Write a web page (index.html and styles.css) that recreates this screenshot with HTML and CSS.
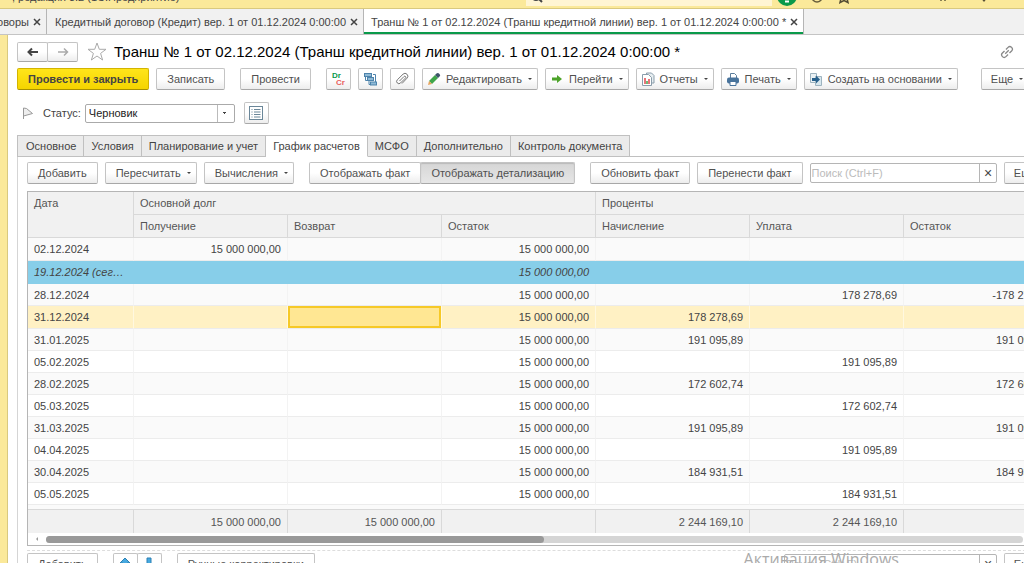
FILE: index.html
```html
<!DOCTYPE html>
<html lang="ru">
<head>
    <meta charset="UTF-8">
    <meta name="viewport" content="width=device-width, initial-scale=1.0">
    <title>Транш № 1 от 02.12.2024</title>
    <link rel="stylesheet" href="styles.css">
</head>
<body>
    <header class="app-bar">
        <span class="app-name">, редакция 3.2 (1С:Предприятие)</span>
        <div class="app-search">
            <svg width="14" height="14" viewBox="0 0 14 14"><circle cx="7" cy="7" r="4" fill="none" stroke="#444" stroke-width="2"/><path d="M10 10l3 3" stroke="#444" stroke-width="2"/></svg>
        </div>
        <div class="app-icons">
            <svg width="20" height="20" viewBox="0 0 20 20"><circle cx="10" cy="9" r="10" fill="#0a9a4a"/><path d="M5 12h10M8 14.500h4" stroke="#fff" stroke-width="2"/></svg>
            <svg width="14" height="14" viewBox="0 0 14 14"><circle cx="7" cy="7" r="5" fill="none" stroke="#665d3b" stroke-width="1.500"/></svg>
            <svg width="14" height="14" viewBox="0 0 14 14"><path d="M7 1l2 4 4 .5-3 3 1 4-4-2-4 2 1-4-3-3 4-.5z" fill="none" stroke="#554d33" stroke-width="1.500"/></svg>
            <svg class="menu-dots" width="14" height="14" viewBox="0 0 14 14"><path d="M4 10h2M8 10h2" stroke="#665d3b" stroke-width="1.500"/></svg>
            <svg class="menu-arrow" width="14" height="14" viewBox="0 0 14 14"><path d="M3 7h8l-4 5z" fill="#554d33"/></svg>
        </div>
    </header>

    <nav class="windows">
        <div class="window first"><a href="#">Договоры</a><button class="close" aria-label="Закрыть"><svg width="8" height="8" viewBox="0 0 8 8"><path d="M1 1l6 6M7 1L1 7"/></svg></button></div>
        <div class="window"><a href="#">Кредитный договор (Кредит) вер. 1 от 01.12.2024 0:00:00</a><button class="close" aria-label="Закрыть"><svg width="8" height="8" viewBox="0 0 8 8"><path d="M1 1l6 6M7 1L1 7"/></svg></button></div>
        <div class="window active"><a href="#">Транш № 1 от 02.12.2024 (Транш кредитной линии) вер. 1 от 01.12.2024 0:00:00 *</a><button class="close" aria-label="Закрыть"><svg width="8" height="8" viewBox="0 0 8 8"><path d="M1 1l6 6M7 1L1 7"/></svg></button></div>
    </nav>

    <main class="form">
        <div class="heading">
            <div class="group">
                <button class="btn arrow" aria-label="Назад"><svg width="14" height="10" viewBox="0 0 14 10"><path d="M2 5h10M6 1.500L2.500 5 6 8.500" fill="none" stroke="#444" stroke-width="2"/></svg></button>
                <button class="btn arrow" aria-label="Вперед"><svg width="14" height="10" viewBox="0 0 14 10"><path d="M2 5h10M8 1.500L11.500 5 8 8.500" fill="none" stroke="#aaa" stroke-width="1.500"/></svg></button>
            </div>
            <svg class="star" width="20" height="19" viewBox="0 0 20 19"><path d="M10 1l2.300 6.300H19l-5.400 4.100 2 6.600L10 14l-5.600 4 2-6.600L1 7.300h6.700z" fill="#fff" stroke="#aaa"/></svg>
            <h1>Транш № 1 от 02.12.2024 (Транш кредитной линии) вер. 1 от 01.12.2024 0:00:00 *</h1>
            <svg class="link" width="14" height="14" viewBox="0 0 14 14"><g fill="none" stroke="#888" stroke-width="1.300" transform="rotate(-45 7 7)"><path d="M6 4.500H3a2.500 2.500 0 0 0 0 5h3M8 4.500h3a2.500 2.500 0 0 1 0 5H8M4.500 7h5"/></g></svg>
        </div>

        <div class="commands">
            <button class="btn primary">Провести и закрыть</button>
            <button class="btn">Записать</button>
            <button class="btn apart">Провести</button>
            <button class="btn icon apart" aria-label="Дт/Кт"><svg width="16" height="16" viewBox="0 0 16 16"><text x="2" y="7" font-size="8" font-weight="bold" fill="#0a9a4a">Dr</text><text x="6" y="14" font-size="8" font-weight="bold" fill="#e8605c">Cr</text></svg></button>
            <button class="btn icon" aria-label="Структура"><svg width="14" height="14" viewBox="0 0 14 14"><path d="M2.500 4v4.500H5M6 9v3.500h2M10 2.500h2.500V10" fill="none" stroke="#4d83ab"/><g fill="#8fbad6" stroke="#4d83ab"><rect x="1.500" y="1.500" width="7" height="3"/><rect x="4.500" y="5.500" width="6" height="3"/><rect x="7.500" y="10" width="6" height="3"/></g></svg></button>
            <button class="btn icon" aria-label="Файлы"><svg width="14" height="14" viewBox="0 0 14 14"><path d="M4.500 9L9 4.500a1 1 0 0 1 1.500 1.500L5.500 11A2.200 2.200 0 0 1 2.300 7.800L8 2.200a2.800 2.800 0 0 1 4 4L7 11.500" fill="none" stroke="#777"/></svg></button>
            <button class="btn menu"><svg width="14" height="14" viewBox="0 0 14 14"><path d="M2 9l6-6 3 3-6 6z" fill="#3fa54a"/><path d="M8 3l1.500-1.500Q11 .5 12.500 2T12.500 4.500L11 6z" fill="#3f556b"/><path d="M2 9l3 3-4 1z" fill="#e8a35c"/></svg>Редактировать</button>
            <button class="btn menu"><svg width="14" height="14" viewBox="0 0 14 14"><path d="M2 5.500h5V3l5 4-5 4V8.500H2z" fill="#4da32a"/></svg>Перейти</button>
            <button class="btn menu"><svg width="14" height="14" viewBox="0 0 14 14"><path d="M5.500 3V1h5L13 3.500V11h-2" fill="#e6edf0" stroke="#8a9dab"/><path d="M1.500 2.500h6l3 3v8h-9z" fill="#fff" stroke="#8a9dab"/><path d="M4 12V6" stroke="#e0474c" stroke-width="1.500"/><path d="M6 12V9" stroke="#3fa54a" stroke-width="1.500"/><path d="M8 12V7" stroke="#e0474c" stroke-width="1.500"/></svg>Отчеты</button>
            <button class="btn menu"><svg width="14" height="14" viewBox="0 0 14 14"><path d="M4.500 6V1.500h4l2 2V6" fill="#fff" stroke="#5b7d9b"/><rect x="1" y="5.500" width="12" height="6" rx="2" fill="#48739b"/><path d="M4 9.500h6v4H4z" fill="#fff" stroke="#48739b"/></svg>Печать</button>
            <button class="btn menu"><svg width="14" height="14" viewBox="0 0 14 14"><path d="M1.500 1.500h6v9h-6z" fill="#eaf1f4" stroke="#9db3bf"/><path d="M6.500 4.500h6v9h-6z" fill="#d7e7ee" stroke="#9db3bf"/><path d="M3 6h4V3.500L11 7.500l-4 4V9H3z" fill="#28618c"/></svg>Создать на основании</button>
            <button class="btn more">Еще</button>
        </div>

        <div class="status">
            <svg width="12" height="12" viewBox="0 0 12 12"><path d="M1.500 12V1l3 .5 6 5-9 2.500" fill="#eee" stroke="#999"/></svg>
            <label for="status">Статус:</label>
            <select id="status">
                <option>Черновик</option>
            </select>
            <button class="btn icon" aria-label="Список"><svg width="14" height="14" viewBox="0 0 14 14"><rect x=".5" y=".5" width="13" height="13" fill="#fff" stroke="#6b8799"/><path d="M2.500 3.500h1M5 3.500h6.500M2.500 6h1M5 6h6.500M2.500 8.500h1M5 8.500h6.500M2.500 11h1M5 11h6.500" stroke="#6b8799"/></svg></button>
        </div>

        <nav class="tabs">
            <button class="tab">Основное</button>
            <button class="tab">Условия</button>
            <button class="tab">Планирование и учет</button>
            <button class="tab current">График расчетов</button>
            <button class="tab">МСФО</button>
            <button class="tab">Дополнительно</button>
            <button class="tab">Контроль документа</button>
        </nav>

        <section class="page">
            <div class="commands">
                <button class="btn">Добавить</button>
                <button class="btn menu">Пересчитать</button>
                <button class="btn menu">Вычисления</button>
                <div class="group apart">
                    <button class="btn">Отображать факт</button>
                    <button class="btn pressed">Отображать детализацию</button>
                </div>
                <button class="btn apart">Обновить факт</button>
                <button class="btn">Перенести факт</button>
                <div class="search">
                    <input type="text" placeholder="Поиск (Ctrl+F)" aria-label="Поиск">
                    <button aria-label="Очистить">×</button>
                </div>
                <button class="btn more">Еще</button>
            </div>

            <div class="grid">
                <table>
                    <colgroup>
                        <col class="date">
                        <col class="sum" span="6">
                    </colgroup>
                    <thead>
                        <tr><th rowspan="2">Дата</th><th colspan="3">Основной долг</th><th colspan="3">Проценты</th></tr>
                        <tr><th>Получение</th><th>Возврат</th><th>Остаток</th><th>Начисление</th><th>Уплата</th><th>Остаток</th></tr>
                    </thead>
                    <tbody>
                        <tr class="opening"><td>02.12.2024</td><td>15 000 000,00</td><td></td><td>15 000 000,00</td><td></td><td></td><td></td></tr>
                        <tr class="today"><td>19.12.2024 (сегодня)</td><td></td><td></td><td>15 000 000,00</td><td></td><td></td><td></td></tr>
                        <tr><td>28.12.2024</td><td></td><td></td><td>15 000 000,00</td><td></td><td>178 278,69</td><td>-178 278,69</td></tr>
                        <tr class="selected"><td>31.12.2024</td><td></td><td class="cell"></td><td>15 000 000,00</td><td>178 278,69</td><td></td><td></td></tr>
                        <tr><td>31.01.2025</td><td></td><td></td><td>15 000 000,00</td><td>191 095,89</td><td></td><td>191 095,89</td></tr>
                        <tr><td>05.02.2025</td><td></td><td></td><td>15 000 000,00</td><td></td><td>191 095,89</td><td></td></tr>
                        <tr><td>28.02.2025</td><td></td><td></td><td>15 000 000,00</td><td>172 602,74</td><td></td><td>172 602,74</td></tr>
                        <tr><td>05.03.2025</td><td></td><td></td><td>15 000 000,00</td><td></td><td>172 602,74</td><td></td></tr>
                        <tr><td>31.03.2025</td><td></td><td></td><td>15 000 000,00</td><td>191 095,89</td><td></td><td>191 095,89</td></tr>
                        <tr><td>04.04.2025</td><td></td><td></td><td>15 000 000,00</td><td></td><td>191 095,89</td><td></td></tr>
                        <tr><td>30.04.2025</td><td></td><td></td><td>15 000 000,00</td><td>184 931,51</td><td></td><td>184 931,51</td></tr>
                        <tr><td>05.05.2025</td><td></td><td></td><td>15 000 000,00</td><td></td><td>184 931,51</td><td></td></tr>
                        <tr class="rest"><td colspan="7"></td></tr>
                    </tbody>
                    <tfoot>
                        <tr><td></td><td>15 000 000,00</td><td>15 000 000,00</td><td></td><td>2 244 169,10</td><td>2 244 169,10</td><td></td></tr>
                    </tfoot>
                </table>
                <div class="scroll">
                    <span class="scroll-left"></span>
                    <div class="track"><div class="thumb"></div></div>
                </div>
            </div>

            <div class="commands lower">
                <button class="btn">Добавить</button>
                <div class="group apart">
                    <button class="btn icon" aria-label="Вверх"><svg width="12" height="14" viewBox="0 0 12 14"><path d="M6 1l5 5H8v7H4V6H1z" fill="#46a9e0" stroke="#2d80b4"/></svg></button>
                    <button class="btn icon" aria-label="Вниз"><svg width="12" height="14" viewBox="0 0 12 14"><path d="M6 13l5-5H8V1H4v7H1z" fill="#46a9e0" stroke="#2d80b4"/></svg></button>
                </div>
                <button class="btn apart">Ручные корректировки</button>
                <div class="search">
                    <input type="text" placeholder="Поиск (Ctrl+F)" aria-label="Поиск">
                    <button aria-label="Очистить">×</button>
                </div>
                <button class="btn more">Еще</button>
            </div>
        </section>
    </main>
    <div class="watermark">Активация Windows</div>
</body>
</html>
```
FILE: styles.css
```css
*{
    margin: 0;
    padding: 0;
    box-sizing: border-box;
}
body{
    font-family: "Liberation Sans", Arial, sans-serif;
    font-size: 11px;
    color: #444;
    background-color: #fff;
    height: 100vh;
    overflow: hidden;
    position: relative;
}
button, input, select{
    font: inherit;
    color: inherit;
}
svg{
    display: block;
    flex: none;
}

/* application bar */
.app-bar{
    display: flex;
    align-items: center;
    height: 23px;
    margin-top: -14px;
    background-color: #fbe99a;
    border-bottom: 1px solid #d9c97f;
}
.app-name{
    flex: 1;
    padding-left: 12px;
}
.app-search{
    width: 24%;
    height: 20px;
    padding: 3px;
    background-color: #fff5d3;
    margin-bottom: 2px;
}
.app-icons{
    display: flex;
    align-items: center;
    gap: 13px;
    width: 252px;
    padding-left: 5px;
}
.menu-dots{
    margin-left: auto;
}
.menu-arrow{
    margin: 0 33px 0 14px;
}

/* open windows */
.windows{
    display: flex;
    height: 26px;
    background-color: #f1f1f1;
    border-bottom: 1px solid #c4c4c4;
}
.window{
    display: flex;
    align-items: center;
    gap: 4px;
    padding: 0 5px 0 8px;
    border-right: 1px solid #b5b5b5;
    white-space: nowrap;
}
.window a{
    color: #444;
    text-decoration: none;
}
.window.first{
    width: 47px;
    justify-content: flex-end;
}
.window.active{
    padding-left: 7px;
    background-color: #fff;
    box-shadow: inset 0 -2px #0a9a4a;
}
.close{
    border: none;
    background: none;
}
.close path{
    stroke: #444;
    stroke-width: 1.5;
}

/* form */
.form{
    margin-right: -27px;
    padding: 6px 0 0 10px;
    border-left: 7px solid #fbe99a;
    box-shadow: inset 1px 0 #d9c97f;
}
.heading{
    display: flex;
    align-items: center;
    height: 21px;
}
.star{
    margin: 0 7px 0 9px;
}
h1{
    font-size: 15px;
    font-weight: normal;
    color: #000;
    white-space: nowrap;
}
.link{
    margin: 0 37px 0 auto;
}
.commands{
    display: flex;
    gap: 7px;
}
.heading + .commands{
    margin-top: 6px;
    padding-right: 23px;
}
.btn{
    display: flex;
    align-items: center;
    justify-content: center;
    flex: none;
    height: 22px;
    padding: 0 10px;
    border: 1px solid #c4c4c4;
    border-bottom-color: #a8a8a8;
    border-radius: 2px;
    background: linear-gradient(#fff 50%, #ededed);
    color: #505050;
    white-space: nowrap;
}
.primary{
    background: linear-gradient(#ffe51a, #f5d400);
    border-color: #d3b400;
    border-bottom-color: #a89000;
    color: #444;
    font-weight: bold;
}
.apart{
    margin-left: 8px;
}
.icon{
    width: 25px;
    padding: 0;
}
.arrow{
    width: 31px;
    height: 20px;
    padding: 0;
}
.menu svg{
    margin: 0 5px 0 -6px;
}
.menu, .more{
    padding-right: 5px;
}
.menu::after, .more::after{
    content: "";
    margin-left: 6px;
    border: 2px solid transparent;
    border-top-color: #444;
    border-bottom: none;
}
.more{
    width: 47px;
    margin-left: auto;
}
.group{
    display: flex;
}
.group .btn + .btn{
    margin-left: -1px;
}
.pressed{
    background: linear-gradient(#d6d6d6, #e6e6e6);
    box-shadow: inset 0 1px 1px #bbb;
}

.status{
    display: flex;
    align-items: center;
    margin-top: 12px;
    padding-left: 5px;
}
.status label{
    margin: 0 4px 0 9px;
}
.status select{
    appearance: none;
    width: 150px;
    height: 19px;
    margin-right: 9px;
    padding-left: 3px;
    border: 1px solid #aaa;
    border-radius: 2px;
    color: #222;
    background:
        conic-gradient(from -45deg at 50% 100%, #444 90deg, transparent 0) right 7px center / 4px 2px no-repeat,
        linear-gradient(#bbb, #bbb) right 16px top / 1px 100% no-repeat,
        #fff;
}

.tabs{
    display: flex;
    margin-top: 11px;
    border-bottom: 1px solid #c0c0c0;
}
.tab{
    height: 22px;
    margin-bottom: -1px;
    padding: 0 7px;
    border: 1px solid #c0c0c0;
    border-left: none;
    background-color: #ebebeb;
    white-space: nowrap;
}
.tab:first-child{
    padding-left: 8px;
    border-left: 1px solid #c0c0c0;
}
.tab.current{
    background-color: #fff;
    border-bottom-color: #fff;
}
.page{
    padding: 5px 0 0 9px;
    border-left: 1px solid #d5d5d5;
}
.search{
    display: flex;
    flex: 1;
    height: 20px;
    margin-top: 1px;
    border: 1px solid #b5b5b5;
    border-radius: 2px;
}
.search input{
    flex: 1;
    min-width: 0;
    padding-left: 1px;
    border: none;
    background: none;
}
.search input::placeholder{
    color: #bbb;
}
.search button{
    width: 17px;
    border: none;
    border-left: 1px solid #b5b5b5;
    background: none;
    font-size: 14px;
    line-height: 16px;
}

/* schedule */
.grid{
    margin-top: 7px;
    border: 1px solid #b5b5b5;
    overflow: hidden;
}
table{
    width: 1030px;
    table-layout: fixed;
    border-collapse: separate;
    border-spacing: 0;
}
.date{
    width: 106px;
}
.sum{
    width: 154px;
}
th, td{
    height: 22px;
    padding: 0 6px;
    line-height: 16px;
    white-space: nowrap;
    overflow: hidden;
    text-overflow: ellipsis;
}
th{
    height: 23px;
    text-align: left;
    vertical-align: top;
    padding-top: 3px;
    font-weight: normal;
    color: #555;
    background-color: #f1f1f1;
    border-right: 1px solid #d9d9d9;
    border-bottom: 1px solid #d9d9d9;
}
td{
    text-align: right;
    border-right: 1px solid #f3f3f3;
    border-bottom: 1px solid #ececec;
}
td:first-child{
    text-align: left;
}
tbody tr:nth-child(odd){
    background-color: #fafafa;
}
.opening td, .today td, .selected td{
    height: 23px;
}
tbody .today{
    background-color: #87cee9;
    font-style: italic;
}
.today td{
    border-color: #87cee9;
}
tbody .selected{
    background-color: #fff1c4;
}
.selected td{
    border-right-color: #fff8e0;
}
.selected .cell{
    background-color: #ffe793;
    box-shadow: inset 0 0 0 2px #f6c927;
}
.rest td{
    height: 4px;
    border: none;
}
tfoot td{
    height: 24px;
    color: #555;
    background-color: #f1f1f1;
    border-top: 1px solid #d9d9d9;
    border-right-color: #d9d9d9;
    border-bottom: none;
}
.scroll{
    display: flex;
    align-items: center;
    height: 12px;
    padding-right: 27px;
}
.scroll-left{
    margin: 0 8px;
    border: 2px solid transparent;
    border-right-color: #999;
    border-left: none;
}
.track{
    flex: 1;
    height: 7px;
    border-radius: 4px;
    background-color: #d5d5d5;
}
.thumb{
    width: 51%;
    height: 7px;
    border-radius: 4px;
    background-color: #999;
}
.lower{
    margin-top: 4px;
    padding-top: 2px;
    border-top: 1px dashed #ddd;
}
.lower .search{
    flex: none;
    width: 213px;
    margin-left: auto;
}
.lower .more{
    margin-left: 0;
}
.watermark{
    position: absolute;
    right: 125px;
    bottom: -7px;
    font-family: "Open Sans", sans-serif;
    font-size: 16px;
    color: #aaa;
}
```
